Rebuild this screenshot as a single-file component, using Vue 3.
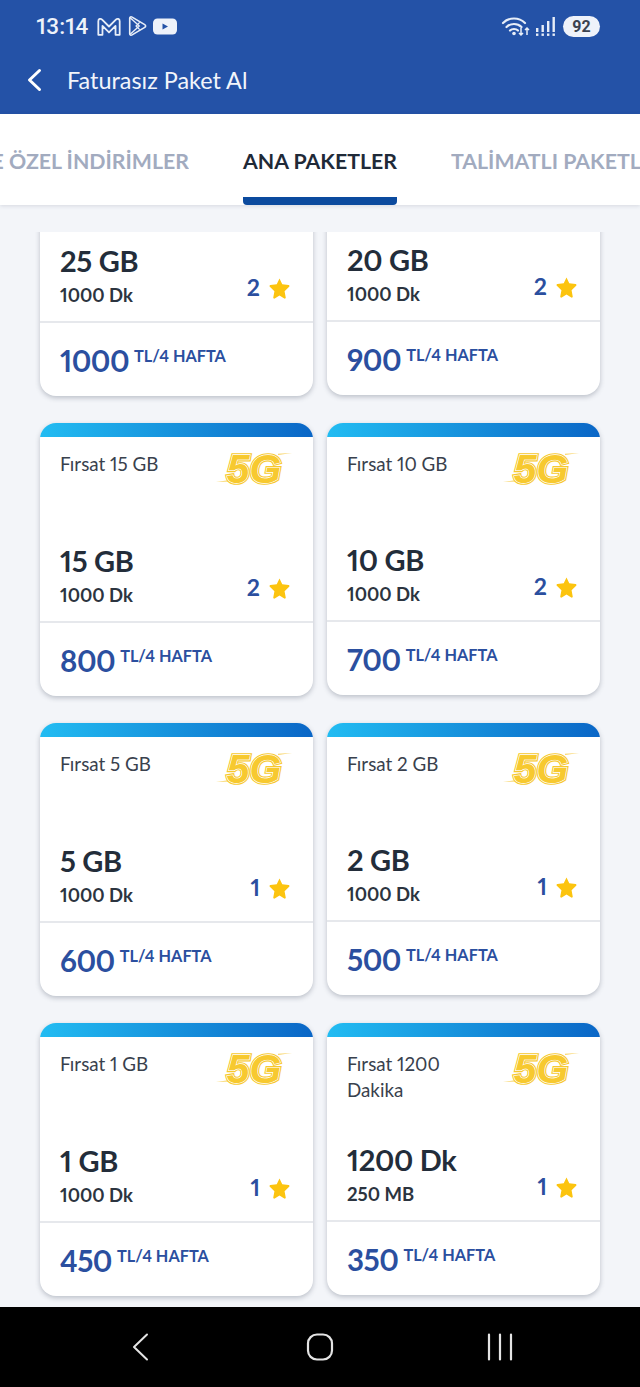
<script setup>
const packages = [
  { id: 1, title: 'Fırsat 25 GB', main: '25 GB', sub: '1000 Dk', stars: 2, price: 1000 },
  { id: 2, title: 'Fırsat 20 GB', main: '20 GB', sub: '1000 Dk', stars: 2, price: 900 },
  { id: 3, title: 'Fırsat 15 GB', main: '15 GB', sub: '1000 Dk', stars: 2, price: 800 },
  { id: 4, title: 'Fırsat 10 GB', main: '10 GB', sub: '1000 Dk', stars: 2, price: 700 },
  { id: 5, title: 'Fırsat 5 GB', main: '5 GB', sub: '1000 Dk', stars: 1, price: 600 },
  { id: 6, title: 'Fırsat 2 GB', main: '2 GB', sub: '1000 Dk', stars: 1, price: 500 },
  { id: 7, title: 'Fırsat 1 GB', main: '1 GB', sub: '1000 Dk', stars: 1, price: 450 },
  { id: 8, title: 'Fırsat 1200 Dakika', main: '1200 Dk', sub: '250 MB', stars: 1, price: 350 }
]
</script>

<template>
  <div class="screen">
    <header class="topbar">
      <div class="status">
        <div class="status-left">
          <span class="time">13:14</span>
          <svg class="ic-gmail" viewBox="2 2 20 16" width="24" height="19">
            <path d="M3 17V5.500C3 3.500 5 3 6.200 4.200L12 10l5.800-5.800C19 3 21 3.500 21 5.500V17h-3.500V9.500L12 15 6.500 9.500V17z" fill="none" stroke="#e8eef8" stroke-width="1.500" stroke-linejoin="round" />
          </svg>
          <svg class="ic-play" viewBox="0 0 22 24" width="20" height="22">
            <path d="M3 3.500C3 2 4.400 1.500 5.600 2.200L19.500 10.500C20.800 11.300 20.800 12.700 19.500 13.500L5.600 21.800C4.400 22.500 3 22 3 20.500z" fill="none" stroke="#e8eef8" stroke-width="1.800" stroke-linejoin="round" />
            <path d="M3.500 3l10 9-10 9M14 8l-4 4 4 4" fill="none" stroke="#e8eef8" stroke-width="1.500" />
          </svg>
          <svg class="ic-yt" viewBox="0 0 24 16" width="24" height="17">
            <rect width="24" height="16" rx="4.500" fill="#eef2fa" />
            <path d="M9.500 5v6l5.500-3z" fill="#2452a7" />
          </svg>
        </div>
        <div class="status-right">
          <svg viewBox="0 0 30 22" width="30" height="22">
            <g fill="none" stroke="#e8eef8" stroke-width="2.200" stroke-linecap="round">
              <path d="M2 8c6-6 16-6 22 0" />
              <path d="M5.500 12c4-4 11-4 15 0" />
              <path d="M9 15.500c2-2 6-2 8 0" />
            </g>
            <circle cx="13" cy="18.500" r="1.800" fill="#e8eef8" />
            <path d="M20 13v7m-2-2 2 2 2-2M26 20v-7m-2 2 2-2 2 2" fill="none" stroke="#e8eef8" stroke-width="1.500" />
          </svg>
          <svg viewBox="0 0 20 20" width="20" height="20">
            <g fill="#e8eef8">
              <rect x="0" y="12" width="2.400" height="4" />
              <rect x="5.500" y="9" width="2.400" height="7" />
              <rect x="11" y="5" width="2.400" height="11" />
              <rect x="16.500" y="1" width="2.400" height="15" />
              <rect x="0" y="17.500" width="2.400" height="2.400" />
              <rect x="5.500" y="17.500" width="2.400" height="2.400" />
              <rect x="11" y="17.500" width="2.400" height="2.400" />
              <rect x="16.500" y="17.500" width="2.400" height="2.400" />
            </g>
          </svg>
          <span class="battery">92</span>
        </div>
      </div>
      <div class="title-row">
        <svg class="back" viewBox="0 0 18 24" width="18" height="24">
          <path d="M14.500 2.500 4.500 12l10 9.500" fill="none" stroke="#fff" stroke-width="3" stroke-linecap="round" stroke-linejoin="round" />
        </svg>
        <h1>Faturasız Paket Al</h1>
      </div>
    </header>

    <nav class="tabs">
      <div class="tab-side left"><span class="tab">SİZE ÖZEL İNDİRİMLER</span></div>
      <div class="tab active">ANA PAKETLER</div>
      <div class="tab-side"><span class="tab">TALİMATLI PAKETLER</span></div>
    </nav>

    <main class="list">
      <div class="grid">
        <article v-for="item in packages" :key="item.id" class="card">
          <div class="card-bar"></div>
          <div class="card-body">
            <div class="card-top">
              <p class="card-title">{{ item.title }}</p>
              <svg class="logo" viewBox="0 0 76 40" width="76" height="40">
                <path d="M14 31 0 33l14-.4zM62 6l14-2-14 .7z" fill="#f5c531" opacity=".75" />
                <g class="logo-text">
                  <text class="logo-a" x="38" y="34" text-anchor="middle">5G</text>
                  <text class="logo-b" x="38" y="34" text-anchor="middle">5G</text>
                  <text class="logo-c" x="38" y="34" text-anchor="middle">5G</text>
                </g>
              </svg>
            </div>
            <div class="card-mid">
              <div>
                <div class="main">{{ item.main }}</div>
                <div class="sub">{{ item.sub }}</div>
              </div>
              <div class="stars">
                <span>{{ item.stars }}</span>
                <svg viewBox="0 0 24 24" width="23" height="23">
                  <path d="M12 2.500l2.900 6.100 6.600.9c.9.100 1.200 1.100.6 1.700l-4.800 4.600 1.200 6.600c.2.900-.8 1.500-1.500 1.100L12 20.400l-5 3.100c-.700.400-1.700-.2-1.500-1.100l1.200-6.600-4.800-4.600c-.6-.6-.3-1.600.6-1.700l6.600-.9z" fill="#fcc40f" />
                </svg>
              </div>
            </div>
          </div>
          <div class="card-foot">
            <span class="price">{{ item.price }}</span>
            <span class="unit">TL/4 HAFTA</span>
          </div>
        </article>
      </div>
    </main>

    <footer class="navbar">
      <svg viewBox="0 0 18 28" width="18" height="28">
        <path d="M16 1.500 3 14l13 12.500" fill="none" stroke="#e4e4e4" stroke-width="2" stroke-linecap="round" stroke-linejoin="round" />
      </svg>
      <svg viewBox="0 0 28 28" width="28" height="28">
        <rect x="2" y="1.500" width="24" height="25" rx="9" fill="none" stroke="#e4e4e4" stroke-width="2.200" />
      </svg>
      <svg viewBox="0 0 26 28" width="26" height="28">
        <path d="M2 1.500v25M13 1.500v25M24 1.500v25" fill="none" stroke="#e4e4e4" stroke-width="2.200" stroke-linecap="round" />
      </svg>
    </footer>
  </div>
</template>

<style>
html, body {
  margin: 0;
  background: #f3f5f9;
}
</style>

<style scoped>
.screen {
  width: 640px;
  height: 1387px;
  display: flex;
  flex-direction: column;
  overflow: hidden;
  background: #f3f5f9;
  font-family: Lato, "Noto Sans", sans-serif;
  font-variant-numeric: proportional-nums;
}

.topbar {
  height: 114px;
  flex-shrink: 0;
  background: #2452a7;
  color: #fff;
}

.status {
  height: 52px;
  padding: 0 40px 0 36px;
  display: flex;
  justify-content: space-between;
  align-items: center;
}

.status-left,
.status-right {
  display: flex;
  align-items: center;
}

.status-left {
  gap: 6px;
}

.status-right {
  gap: 5px;
}

.time {
  font-family: Roboto, sans-serif;
  font-size: 22.500px;
  font-weight: 500;
  color: #eef2fa;
  margin-right: 3px;
}

.battery {
  width: 37px;
  height: 21px;
  margin-left: 2px;
  border-radius: 11px;
  background: #eef2fa;
  color: #3b4250;
  font-family: Roboto, sans-serif;
  font-size: 16px;
  font-weight: 700;
  line-height: 21px;
  text-align: center;
}

.title-row {
  height: 56px;
  padding-left: 25px;
  display: flex;
  align-items: center;
  gap: 24px;
}

.title-row h1 {
  margin: 0;
  font-size: 23.400px;
  font-weight: 400;
  color: #f2f5fb;
}

.tabs {
  height: 91px;
  flex-shrink: 0;
  display: grid;
  grid-template-columns: 1fr auto 1fr;
  column-gap: 54px;
  background: #fff;
  box-shadow: 0 1px 4px rgba(40, 50, 80, 0.14);
  position: relative;
  overflow: hidden;
}

.tab-side {
  min-width: 0;
  overflow: hidden;
  display: flex;
}

.tab-side.left {
  justify-content: flex-end;
}

.tab {
  flex-shrink: 0;
  padding-top: 34px;
  height: 57px;
  font-size: 21.300px;
  font-weight: 700;
  line-height: 27px;
  color: #a2abbf;
  white-space: nowrap;
}

.tab.active {
  color: #1f2a38;
  border-bottom: 8px solid #0b4a9e;
  border-radius: 0 0 4px 4px;
  height: 49px;
}

.list {
  height: 1075px;
  flex-shrink: 0;
  margin-top: 27px;
  overflow: hidden;
}

.grid {
  margin-top: -109px;
  padding: 0 40px;
  display: grid;
  grid-template-columns: 273px 273px;
  grid-auto-rows: 273px;
  column-gap: 14px;
  row-gap: 27px;
}

.card {
  display: flex;
  flex-direction: column;
  background: #fff;
  border-radius: 16px;
  overflow: hidden;
  box-shadow: 0 2px 5px rgba(60, 70, 90, 0.3);
}

.card:nth-child(even) {
  height: 272px;
}

.card-bar {
  height: 14px;
  flex-shrink: 0;
  background: linear-gradient(90deg, #22bcf2, #0a66c6);
}

.card-body {
  flex: 1;
  min-height: 0;
  padding: 14px 22px 0 20px;
  display: flex;
  flex-direction: column;
  justify-content: space-between;
}

.card-top {
  display: flex;
  justify-content: space-between;
  align-items: flex-start;
}

.card-title {
  margin: 0;
  width: 120px;
  font-size: 18.800px;
  line-height: 26px;
  color: #39414d;
}

.logo {
  margin: -2px -1px 0 0;
  flex-shrink: 0;
}

.logo-text text {
  font-family: "Liberation Sans", sans-serif;
  font-size: 41px;
  font-style: italic;
  font-weight: 700;
}

.logo-a {
  fill: #f7c92f;
  stroke: #f7c92f;
  stroke-width: 3.600;
}

.logo-b {
  fill: #fff;
  stroke: #fff;
  stroke-width: 1.300;
}

.logo-c {
  fill: #f7c92f;
}

.card-mid {
  display: flex;
  justify-content: space-between;
  align-items: flex-end;
  padding-bottom: 14px;
}

.main {
  font-size: 29px;
  font-weight: 700;
  line-height: 36px;
  letter-spacing: -0.3px;
  color: #232d3a;
}

.sub {
  margin-top: 4px;
  font-size: 18.500px;
  font-weight: 700;
  line-height: 24px;
  color: #2c3440;
}

.stars {
  display: flex;
  align-items: center;
  gap: 8px;
  margin-bottom: 6px;
  font-size: 23px;
  font-weight: 700;
  color: #2b4f9f;
}

.card-foot {
  height: 73px;
  flex-shrink: 0;
  border-top: 2px solid #e6e8ec;
  padding-left: 20px;
  display: flex;
  align-items: flex-start;
  gap: 5px;
  color: #2b4f9f;
  font-weight: 700;
}

.price {
  margin-top: 18px;
  font-size: 29.500px;
  line-height: 40px;
  letter-spacing: -0.5px;
}

.unit {
  margin-top: 22px;
  font-size: 16.300px;
  line-height: 22px;
}

.navbar {
  height: 80px;
  flex-shrink: 0;
  background: #000;
  display: grid;
  grid-template-columns: 180px 180px 180px;
  justify-content: center;
  justify-items: center;
  align-items: center;
}
</style>
